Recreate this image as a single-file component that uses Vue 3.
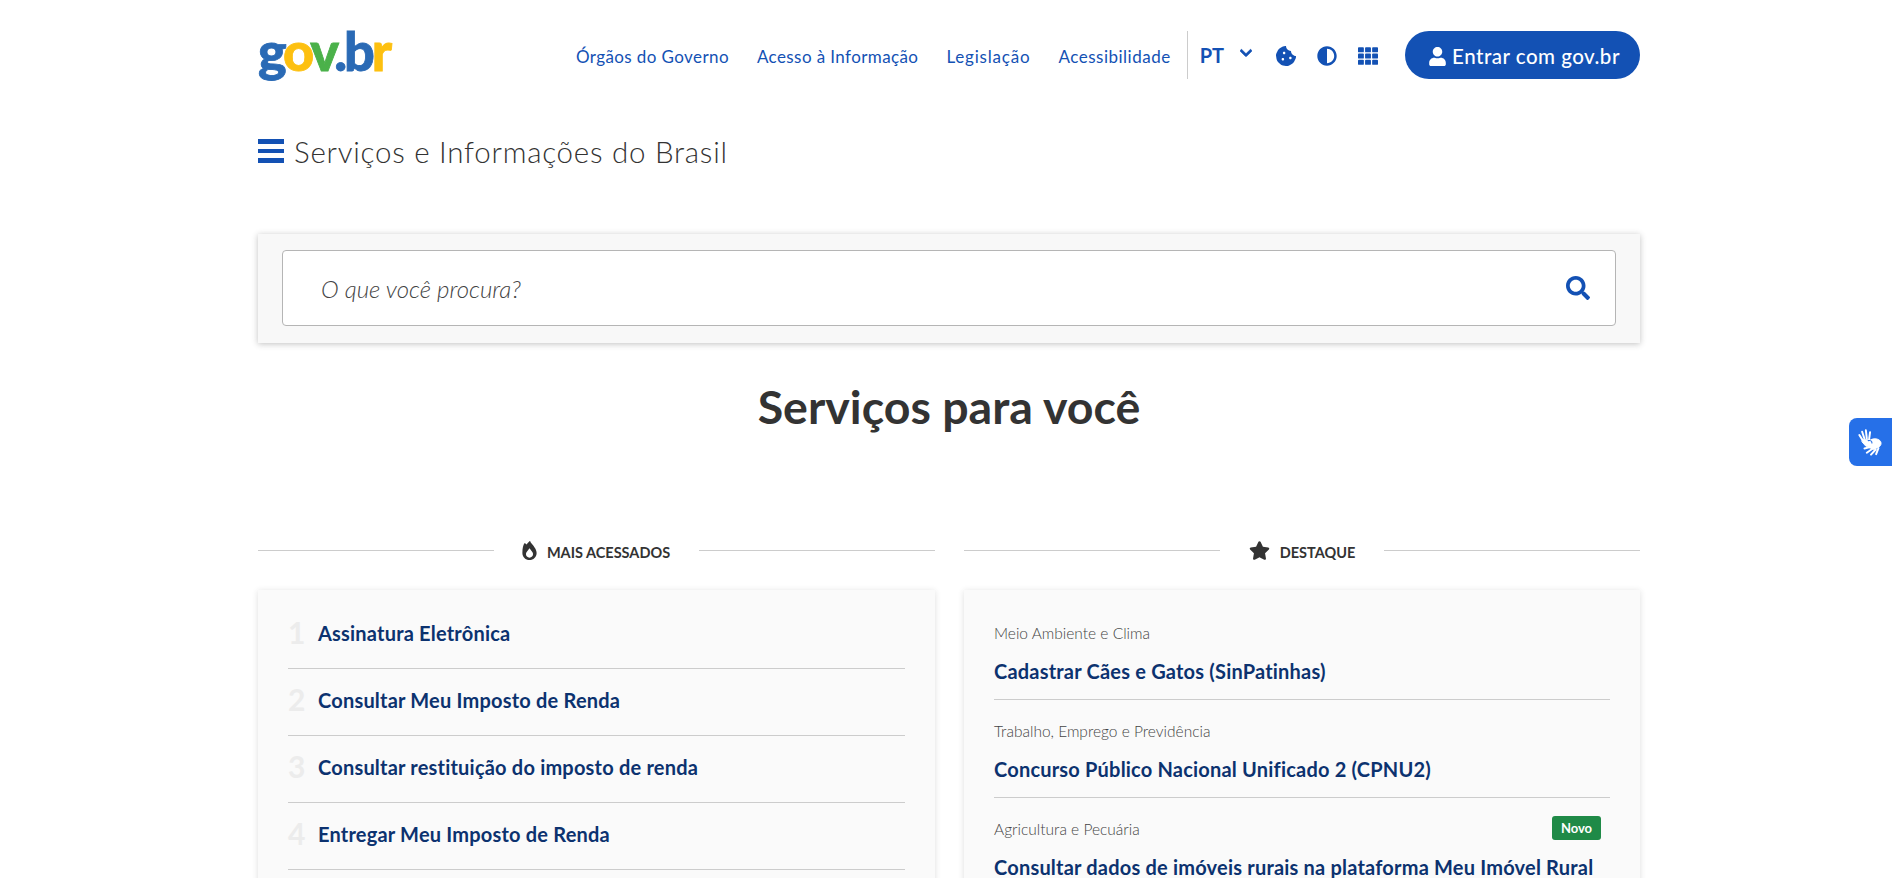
<template>
  <div class="page">
    <div class="container">
      <header class="top">
        <div class="logo"><span class="c-blue">g</span><span class="c-yellow">o</span><span class="c-green">v</span><span class="c-blue">.b</span><span class="c-yellow">r</span></div>
        <nav class="nav">
          <a v-for="link in links" :key="link">{{ link }}</a>
        </nav>
        <div class="tools">
          <span class="lang">PT</span>
          <svg class="chev" viewBox="0 0 448 512"><path d="M207.029 381.476L12.686 187.132c-9.373-9.373-9.373-24.569 0-33.941l22.667-22.667c9.357-9.357 24.522-9.375 33.901-.04L224 284.505l154.745-154.021c9.379-9.335 24.544-9.317 33.901.04l22.667 22.667c9.373 9.373 9.373 24.569 0 33.941L240.971 381.476c-9.373 9.372-24.569 9.372-33.942 0z"/></svg>
          <svg class="tool cookie" viewBox="0 0 512 512"><path d="M510.52 255.82c-69.97-.85-126.47-57.69-126.47-127.86-70.17 0-127-56.49-127.86-126.45-27.26-4.14-55.13.3-79.72 12.82l-69.13 35.22a132.221 132.221 0 0 0-57.79 57.81l-35.1 68.88a132.645 132.645 0 0 0-12.82 80.95l12.08 76.27a132.521 132.521 0 0 0 37.16 72.96l54.77 54.76a132.036 132.036 0 0 0 72.71 37.06l76.71 12.15c27.51 4.36 55.7-.11 80.53-12.76l69.13-35.21a132.273 132.273 0 0 0 57.79-57.81l35.1-68.88c12.56-24.64 17.01-52.58 12.91-79.91zM176 368c-17.67 0-32-14.33-32-32s14.33-32 32-32 32 14.33 32 32-14.33 32-32 32zm32-160c-17.67 0-32-14.33-32-32s14.33-32 32-32 32 14.33 32 32-14.33 32-32 32zm160 128c-17.67 0-32-14.33-32-32s14.33-32 32-32 32 14.33 32 32-14.33 32-32 32z"/></svg>
          <svg class="tool" viewBox="0 0 512 512"><path d="M8 256c0 136.966 111.033 248 248 248s248-111.034 248-248S392.966 8 256 8 8 119.033 8 256zm248 184V72c101.705 0 184 82.311 184 184 0 101.705-82.311 184-184 184z"/></svg>
          <svg class="tool" viewBox="0 0 512 512">
            <template v-for="y in [32, 192, 352]" :key="y">
              <rect v-for="x in [0, 181, 362]" :key="x" :x="x" :y="y" width="150" height="128" rx="22" />
            </template>
          </svg>
        </div>
        <button class="login">
          <svg viewBox="0 0 448 512"><path d="M224 256c70.7 0 128-57.3 128-128S294.7 0 224 0 96 57.3 96 128s57.3 128 128 128zm89.6 32h-16.7c-22.2 10.2-46.9 16-72.9 16s-50.6-5.8-72.9-16h-16.7C60.2 288 0 348.2 0 422.4V464c0 26.5 21.5 48 48 48h352c26.5 0 48-21.5 48-48v-41.6c0-74.2-60.2-134.4-134.4-134.4z"/></svg>
          Entrar com gov.br
        </button>
      </header>

      <div class="site-title">
        <div class="burger"><i></i><i></i><i></i></div>
        <span>Serviços e Informações do Brasil</span>
      </div>

      <div class="search-card">
        <div class="search-box">
          <span class="placeholder">O que você procura?</span>
          <svg viewBox="0 0 512 512"><path d="M505 442.7L405.3 343c-4.5-4.5-10.6-7-17-7H372c27.6-35.3 44-79.7 44-128C416 93.1 322.9 0 208 0S0 93.1 0 208s93.1 208 208 208c48.3 0 92.7-16.4 128-44v16.3c0 6.4 2.5 12.5 7 17l99.7 99.7c9.4 9.4 24.6 9.4 33.9 0l28.3-28.3c9.4-9.4 9.4-24.6.1-34zM208 336c-70.7 0-128-57.2-128-128 0-70.7 57.2-128 128-128 70.7 0 128 57.2 128 128 0 70.7-57.2 128-128 128z"/></svg>
        </div>
      </div>

      <h1 class="heading">Serviços para você</h1>

      <div class="columns">
        <section>
          <div class="divider">
            <svg class="fire" viewBox="0 0 384 512"><path fill-rule="evenodd" d="M216 24c7-16-10-30-24-20-36 30-60 60-80 92-10-8-20-18-30-30C72 56 56 58 50 70 24 118 0 190 0 320c0 106 86 192 192 192s192-86 192-192c0-110-100-210-168-296zM192 448c-53 0-96-40-96-96 0-46 48-96 96-160 48 64 96 114 96 160 0 56-43 96-96 96z"/></svg>
            <span>MAIS ACESSADOS</span>
          </div>
          <div class="card ranked">
            <div v-for="(item, i) in ranked" :key="item" class="rank-row">
              <span class="num">{{ i + 1 }}</span>
              <a>{{ item }}</a>
            </div>
          </div>
        </section>
        <section>
          <div class="divider">
            <svg class="star" viewBox="0 0 576 512"><path d="M259.3 17.8L194 150.2 47.9 171.5c-26.2 3.8-36.7 36.1-17.7 54.6l105.7 103-25 145.5c-4.5 26.3 23.2 46 46.4 33.7L288 439.6l130.7 68.7c23.2 12.2 50.9-7.4 46.4-33.7l-25-145.5 105.7-103c19-18.5 8.5-50.8-17.7-54.6L382 150.2 316.7 17.8c-11.7-23.6-45.6-23.9-57.4 0z"/></svg>
            <span>DESTAQUE</span>
          </div>
          <div class="card featured">
            <div v-for="item in featured" :key="item.title" class="feat-row">
              <div class="cat">
                <span>{{ item.cat }}</span>
                <b v-if="item.isNew" class="badge">Novo</b>
              </div>
              <a>{{ item.title }}</a>
            </div>
          </div>
        </section>
      </div>
    </div>

    <div class="vlibras">
      <svg viewBox="0 0 30 30" fill="none" stroke="#fff" stroke-linecap="round" stroke-linejoin="round">
        <path d="M6 13 2.500 7.500M8 11.500 5.500 4M10.500 11 9.500 2.500M13 12l1-7.500" stroke-width="2.100"/>
        <path d="M6 12.500h7.500l1.500 3.500-2 4-3.500-.5-4-4.500z" fill="#fff" stroke-width="1"/>
        <path d="M14 13c3-2 8-2 10.500.5 2 2 1.500 5-.5 6.500l-6 3-5-2z" fill="#fff" stroke-width="1"/>
        <path d="M16 20 8 22M17 22l-6.500 4.500M20 23l-5 5.500M23 21.500 20.500 28" stroke-width="2.100"/>
        <path d="M12 13.500c2.500-.5 4 .5 4 2.500" stroke="#2670e8" stroke-width="1.200"/>
      </svg>
    </div>
  </div>
</template>

<script setup>
const links = ['Órgãos do Governo', 'Acesso à Informação', 'Legislação', 'Acessibilidade']

const ranked = [
  'Assinatura Eletrônica',
  'Consultar Meu Imposto de Renda',
  'Consultar restituição do imposto de renda',
  'Entregar Meu Imposto de Renda',
]

const featured = [
  { cat: 'Meio Ambiente e Clima', title: 'Cadastrar Cães e Gatos (SinPatinhas)' },
  { cat: 'Trabalho, Emprego e Previdência', title: 'Concurso Público Nacional Unificado 2 (CPNU2)' },
  { cat: 'Agricultura e Pecuária', title: 'Consultar dados de imóveis rurais na plataforma Meu Imóvel Rural', isNew: true },
]
</script>

<style>
html, body {
  overflow: hidden;
}
</style>

<style scoped>
.page {
  position: relative;
  height: 100vh;
  overflow: hidden;
  background: #fff;
  font-family: Lato, "Open Sans", sans-serif;
  color: #333;
}

.container {
  width: 1382px;
  margin-left: 258px;
}

.top {
  display: flex;
  align-items: center;
  height: 48px;
  padding-top: 31px;
}

.logo {
  width: 134px;
  font-weight: 900;
  font-size: 54px;
  line-height: 48px;
  letter-spacing: -3.100px;
  margin-top: -8px;
  white-space: nowrap;
  -webkit-text-stroke: 0.8px currentColor;
}

.c-blue { color: #2a6ab5; }
.c-yellow { color: #fdc010; }
.c-green { color: #4bb14a; }

.nav {
  display: flex;
  gap: 28px;
  margin: 2px 0 0 184px;
  font-size: 17px;
  letter-spacing: 0.4px;
  color: #1351b4;
  white-space: nowrap;
}

.nav a:nth-child(3) {
  letter-spacing: 0.8px;
}

.nav a:nth-child(4) {
  letter-spacing: 0.5px;
}

.tools {
  display: flex;
  align-items: center;
  height: 48px;
  margin-left: 16px;
  padding-left: 12px;
  border-left: 1px solid #ccc;
  fill: #1351b4;
}

.lang {
  width: 26px;
  font-weight: 700;
  font-size: 20px;
  color: #1351b4;
}

.chev {
  width: 12px;
  height: 14px;
  margin: -4px 0 0 14px;
  stroke: #1351b4;
  stroke-width: 30px;
}

.tool {
  width: 20px;
  height: 20px;
  margin: 2px 0 0 21px;
}

.cookie {
  margin-left: 24px;
}

.login {
  display: flex;
  align-items: center;
  justify-content: center;
  gap: 6px;
  width: 235px;
  height: 48px;
  margin-left: auto;
  padding: 2px 0 0 4px;
  border: 0;
  border-radius: 24px;
  background: #1351b4;
  color: #fff;
  font-family: inherit;
  font-weight: 500;
  font-size: 20.500px;
  letter-spacing: 0.5px;
}

.login svg {
  width: 17px;
  height: 19px;
  fill: #fff;
}

.site-title {
  display: flex;
  align-items: center;
  gap: 10px;
  margin-top: 57px;
  height: 30px;
  font-weight: 300;
  font-size: 29.500px;
  letter-spacing: 0.75px;
  color: #333;
}

.burger {
  display: flex;
  flex-direction: column;
  gap: 5px;
  width: 26px;
}

.burger i {
  height: 4.500px;
  background: #1351b4;
}

.search-card {
  margin-top: 68px;
  padding: 16px 24px 17px;
  background: #f8f8f8;
  box-shadow: 0 1px 6px rgba(51, 51, 51, 0.3);
}

.search-box {
  display: flex;
  align-items: center;
  justify-content: space-between;
  height: 74px;
  padding: 0 25px 0 38px;
  background: #fff;
  border: 1px solid #b5b5b5;
  border-radius: 4px;
}

.placeholder {
  font-style: italic;
  font-weight: 300;
  font-size: 24px;
  color: #444;
}

.search-box svg {
  width: 24px;
  height: 24px;
  fill: #1351b4;
}

.heading {
  margin: 36px 0 0;
  text-align: center;
  font-weight: 700;
  font-size: 46.500px;
  line-height: 54px;
  color: #333;
}

.columns {
  display: grid;
  grid-template-columns: 677px 676px;
  gap: 29px;
  margin-top: 106px;
}

.divider {
  display: flex;
  align-items: center;
  height: 24px;
  font-weight: 700;
  font-size: 14.500px;
  color: #333;
}

.divider::before,
.divider::after {
  content: '';
  flex: 1;
  height: 1px;
  background: #ccc;
  margin-top: -2px;
}

.divider span {
  margin: 2px 29px 0 0;
}

.fire {
  width: 15px;
  height: 19px;
  margin: -2px 10px 0 28px;
  fill: #333;
}

.star {
  width: 21px;
  height: 19px;
  margin: -2px 10px 0 29px;
  fill: #333;
}

.card {
  margin-top: 27px;
  padding: 12px 30px 30px;
  background: #fafafa;
  box-shadow: 0 1px 6px rgba(51, 51, 51, 0.16);
}

.rank-row {
  display: flex;
  align-items: center;
  height: 66px;
  border-bottom: 1px solid #ccc;
}

.num {
  width: 30px;
  margin-top: -7px;
  font-weight: 700;
  font-size: 30px;
  color: #ececec;
}

.rank-row a,
.feat-row a {
  display: block;
  font-weight: 700;
  font-size: 20px;
  line-height: 24px;
  letter-spacing: 0.2px;
  color: #0c326f;
  white-space: nowrap;
}

.rank-row a {
  margin-top: -5px;
}

.feat-row {
  height: 98px;
  border-bottom: 1px solid #ccc;
  padding-top: 19px;
  box-sizing: border-box;
}

.feat-row:last-child {
  border-bottom: 0;
}

.cat {
  display: flex;
  align-items: center;
  justify-content: space-between;
  height: 24px;
  padding-right: 9px;
  font-weight: 300;
  font-size: 15.500px;
  color: #444;
  margin-bottom: 14px;
}

.badge {
  display: block;
  width: 49px;
  height: 24px;
  margin-top: -2px;
  border-radius: 3px;
  background: #1f8a47;
  color: #fff;
  text-align: center;
  font-weight: 700;
  font-size: 13px;
  line-height: 24px;
}

.vlibras {
  position: absolute;
  top: 418px;
  right: 0;
  display: flex;
  align-items: center;
  justify-content: center;
  width: 43px;
  height: 48px;
  border-radius: 8px 0 0 8px;
  background: #2670e8;
}

.vlibras svg {
  width: 28px;
  height: 28px;
}
</style>
